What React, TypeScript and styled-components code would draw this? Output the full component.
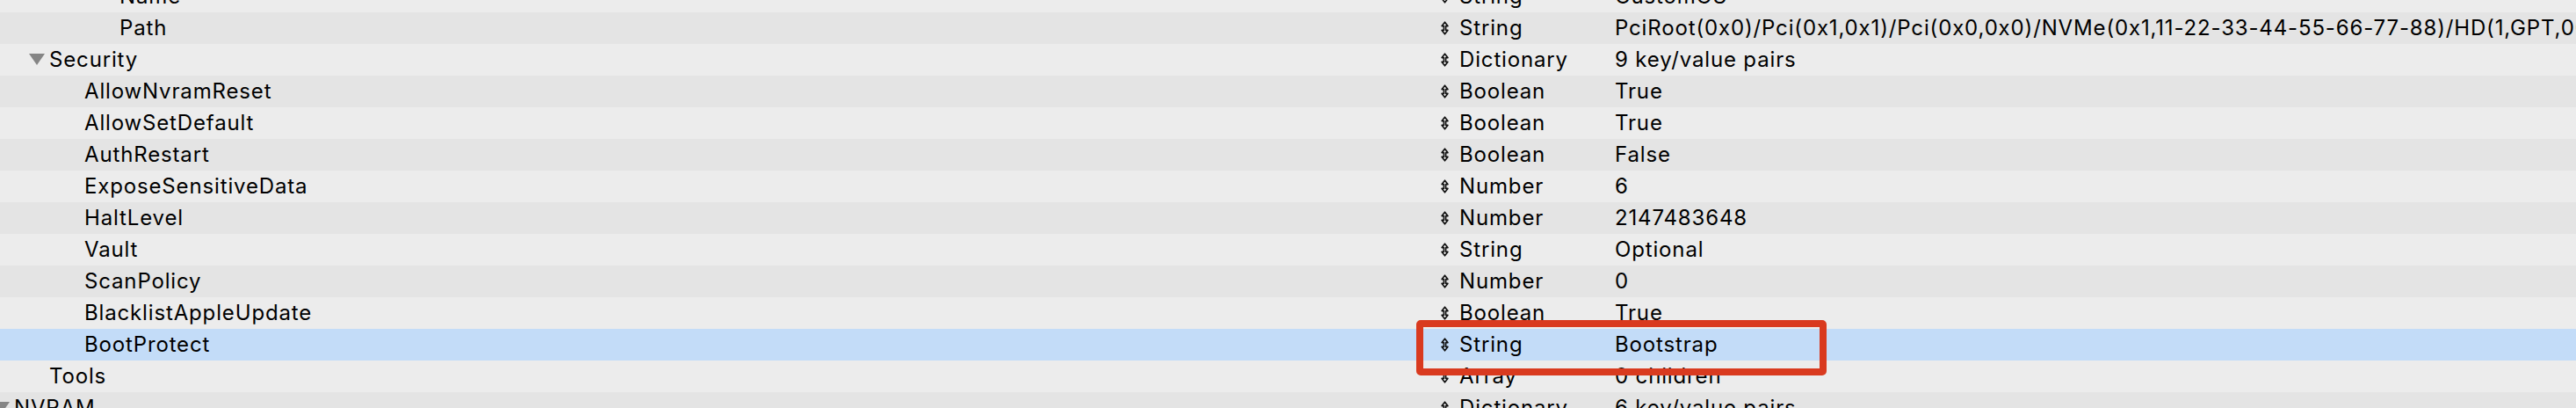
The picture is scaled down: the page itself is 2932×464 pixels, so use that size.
import React, { useLayoutEffect, useRef } from 'react'
import styled, { createGlobalStyle } from 'styled-components'

const GlobalStyle = createGlobalStyle`
  html, body {
    margin: 0;
    padding: 0;
    background: #ececec;
  }
  body {
    font-family: Inter, "Noto Sans", "Liberation Sans", sans-serif;
    color: #000;
  }
`

const Viewport = styled.div`
  height: 464px;
  width: 2932px;
  overflow: hidden;
  background: #ececec;
`

const Outline = styled.div`
  display: flex;
  flex-direction: column;
`

const Row = styled.div<{ $shade: 'light' | 'dark' | 'selected' }>`
  position: relative;
  display: grid;
  grid-template-columns: 1630px 208px 1fr;
  height: 36px;
  align-items: center;
  font-size: 24px;
  letter-spacing: 0.85px;
  line-height: 36px;
  white-space: nowrap;
  background: ${({ $shade }) =>
    $shade === 'selected' ? '#c3dcf8' : $shade === 'dark' ? '#e4e4e4' : '#ececec'};
`

const KeyCell = styled.div<{ $level: number }>`
  position: relative;
  padding-left: ${({ $level }) => 16 + $level * 40}px;
  overflow: hidden;
`

const Disclosure = styled.span`
  position: absolute;
  top: 11px;
  margin-left: -23px;
  width: 0;
  height: 0;
  border-left: 9px solid transparent;
  border-right: 9px solid transparent;
  border-top: 13px solid #858585;
`

const TypeCell = styled.div`
  display: flex;
  align-items: center;
  gap: 12px;
  padding-left: 10px;
`

const ValueCell = styled.div`
  overflow: hidden;
`

const Callout = styled.div`
  position: absolute;
  z-index: 2;
  top: -10px;
  left: 1612px;
  width: 467px;
  height: 63px;
  box-sizing: border-box;
  border: 8px solid #d93a1f;
  border-radius: 5px;
  pointer-events: none;
`

const Stepper = () => (
  <svg width="9" height="16" viewBox="0 0 9 16">
    <path
      d="M4.5 1.2 L7.9 5.6 H5.6 V10.4 H7.9 L4.5 14.8 L1.1 10.4 H3.4 V5.6 H1.1 Z"
      fill="none"
      stroke="#111"
      strokeWidth="1.6"
      strokeLinejoin="round"
    />
  </svg>
)

type Entry = {
  key: string
  level: number
  type: string
  value: string
  open?: boolean
  selected?: boolean
}

const entries: Entry[] = [
  { key: 'Name', level: 3, type: 'String', value: 'CustomOS' },
  {
    key: 'Path',
    level: 3,
    type: 'String',
    value:
      'PciRoot(0x0)/Pci(0x1,0x1)/Pci(0x0,0x0)/NVMe(0x1,11-22-33-44-55-66-77-88)/HD(1,GPT,00000000-0000-0000-0000-000000000000,0x28,0x64000)/\\EFI\\OC\\OpenCore.efi',
  },
  { key: 'Security', level: 1, type: 'Dictionary', value: '9 key/value pairs', open: true },
  { key: 'AllowNvramReset', level: 2, type: 'Boolean', value: 'True' },
  { key: 'AllowSetDefault', level: 2, type: 'Boolean', value: 'True' },
  { key: 'AuthRestart', level: 2, type: 'Boolean', value: 'False' },
  { key: 'ExposeSensitiveData', level: 2, type: 'Number', value: '6' },
  { key: 'HaltLevel', level: 2, type: 'Number', value: '2147483648' },
  { key: 'Vault', level: 2, type: 'String', value: 'Optional' },
  { key: 'ScanPolicy', level: 2, type: 'Number', value: '0' },
  { key: 'BlacklistAppleUpdate', level: 2, type: 'Boolean', value: 'True' },
  { key: 'BootProtect', level: 2, type: 'String', value: 'Bootstrap', selected: true },
  { key: 'Tools', level: 1, type: 'Array', value: '0 children' },
  { key: 'NVRAM', level: 0, type: 'Dictionary', value: '6 key/value pairs', open: true },
]

const App = () => {
  const viewRef = useRef<HTMLDivElement>(null)

  // the outline is scrolled a little past the "Name" row
  useLayoutEffect(() => {
    if (viewRef.current) viewRef.current.scrollTop = 22
  }, [])

  return (
    <>
      <GlobalStyle />
      <Viewport ref={viewRef}>
        <Outline>
          {entries.map((e, i) => (
            <Row
              key={e.key}
              $shade={e.selected ? 'selected' : i % 2 === 1 ? 'dark' : 'light'}
            >
              <KeyCell $level={e.level}>
                {e.open && <Disclosure />}
                {e.key}
              </KeyCell>
              <TypeCell>
                <Stepper />
                {e.type}
              </TypeCell>
              <ValueCell>{e.value}</ValueCell>
              {e.selected && <Callout />}
            </Row>
          ))}
        </Outline>
      </Viewport>
    </>
  )
}

export default App
